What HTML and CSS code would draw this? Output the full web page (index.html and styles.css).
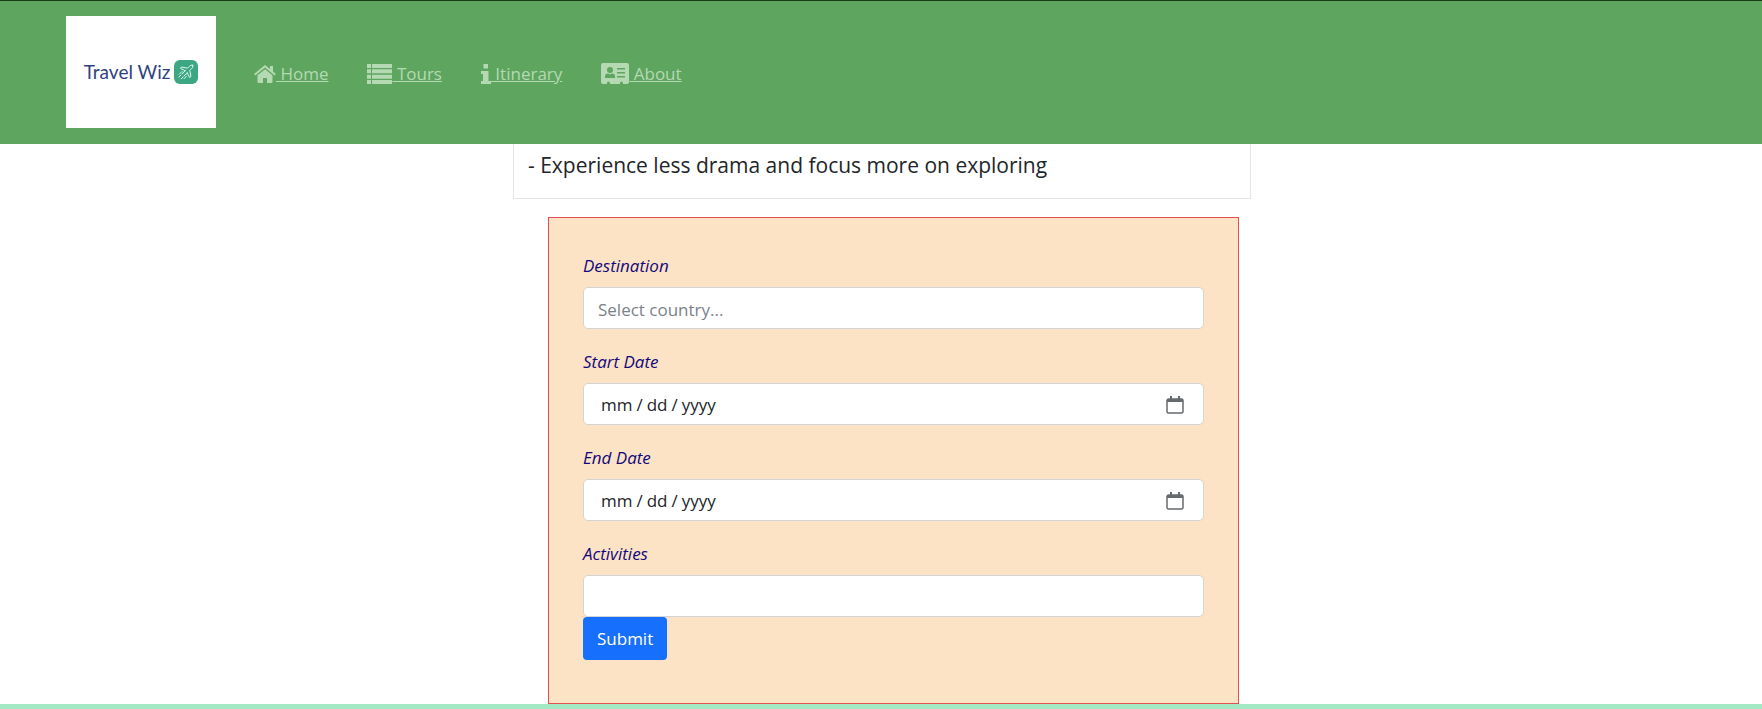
FILE: index.html
```html
<!DOCTYPE html>
<html lang="en">
<head>
<meta charset="utf-8">
<meta name="viewport" content="width=device-width, initial-scale=1">
<title>Travel Wiz</title>
<link rel="stylesheet" href="styles.css">
</head>
<body>
<header class="navbar">
  <a class="brand" href="#">
    <span class="brand-name">Travel Wiz</span>
    <svg class="brand-icon" viewBox="0 0 24 24" aria-hidden="true">
      <rect width="24" height="24" rx="6" fill="#3ba783"/>
      <g fill="none" stroke="#e4f6ef" stroke-width="1" stroke-linejoin="round" stroke-linecap="round">
        <path d="M18.8 5.2c-1.3-.5-2.6.3-3.400 1.200L13.600 8.200 7.600 7l-1.200 1.300 4.700 2.400M18.800 5.200c.5 1.300-.3 2.600-1.200 3.400L15.800 10.400 17 16.400l-1.300 1.200-2.400-4.700"/>
        <path d="M11.100 10.700L8 14M13.300 12.900L10 16M8 11.500l-2.800 2.800M6.800 15.200l-1.900 1.900M9 17l-1.800 1.900M12.500 16.200l-2.500 2.500"/>
      </g>
    </svg>
  </a>
  <nav class="nav-links">
    <a class="nav-link" href="#"><svg class="nav-icon" width="22" height="18" viewBox="0 0 22 18" aria-hidden="true"><path d="M11 0L0 9l1.300 1.500L11 2.600l9.700 7.900L22 9l-3-2.500V1h-3v3zM11 4.200L3.500 10.300V17a1 1 0 0 0 1 1H9v-5h4v5h4.500a1 1 0 0 0 1-1v-6.700z"/></svg><span class="nav-text">&nbsp;Home</span></a>
    <a class="nav-link" href="#"><svg class="nav-icon" width="25" height="20" viewBox="0 0 25 20" aria-hidden="true"><path d="M0 0h4v4H0zM5 0h20v4H5zM0 5.300h4v4H0zM5 5.300h20v4H5zM0 10.700h4v4H0zM5 10.700h20v4H5zM0 16h4v4H0zM5 16h20v4H5z"/></svg><span class="nav-text">&nbsp;Tours</span></a>
    <a class="nav-link" href="#"><svg class="nav-icon" width="10" height="20" viewBox="0 0 10 20" aria-hidden="true"><path d="M2.500 0h4.500v4.500H2.500zM0 7h7.500v10H10v3H0v-3h2v-7H0z"/></svg><span class="nav-text">&nbsp;Itinerary</span></a>
    <a class="nav-link" href="#"><svg class="nav-icon" width="28" height="22" viewBox="0 0 28 22" aria-hidden="true"><path fill-rule="evenodd" d="M2 0h24a2 2 0 0 1 2 2v17a2 2 0 0 1-2 2h-4v-1a1 1 0 0 0-3 0v1H9v-1a1 1 0 0 0-3 0v1H2a2 2 0 0 1-2-2V2a2 2 0 0 1 2-2zM9 4a3 3 0 1 0 0 6 3 3 0 0 0 0-6zM7 10.500a3 3 0 0 0-3 3V15h10v-1.500a3 3 0 0 0-3-3c-1 1-3 1-4 0zM16 5h8v1.500h-8zM16 9h8v1.500h-8zM16 13h8v1.500h-8z"/></svg><span class="nav-text">&nbsp;About</span></a>
  </nav>
</header>
<main class="content">
  <section class="card">
    <p class="card-text">- Experience less drama and focus more on exploring</p>
  </section>
  <form class="trip-form">
    <div class="field">
      <label class="label" for="destination">Destination</label>
      <input class="input" id="destination" type="text" placeholder="Select country...">
    </div>
    <div class="field">
      <label class="label" for="start">Start Date</label>
      <input class="input" id="start" type="date">
    </div>
    <div class="field">
      <label class="label" for="end">End Date</label>
      <input class="input" id="end" type="date">
    </div>
    <div class="field">
      <label class="label" for="activities">Activities</label>
      <input class="input" id="activities" type="text">
    </div>
    <button class="submit" type="submit">Submit</button>
  </form>
</main>
<footer class="footer"></footer>
</body>
</html>
```
FILE: styles.css
```css
* { box-sizing: border-box; }

body {
  margin: 0;
  min-height: 100vh;
  display: flex;
  flex-direction: column;
  background: #fff;
  color: #212529;
  font-family: "Open Sans", "Noto Sans", sans-serif;
  font-size: 17px;
  line-height: 26px;
}

.navbar {
  display: flex;
  align-items: center;
  gap: 38px;
  padding: 15px 66px 16px;
  border-top: 1px solid #173d17;
  background: #5ea55f;
}

.brand {
  display: flex;
  align-items: center;
  justify-content: center;
  gap: 4px;
  width: 150px;
  height: 112px;
  background: #fff;
  color: #2f437f;
  font-family: Lato, sans-serif;
  font-size: 19px;
  text-decoration: none;
  white-space: nowrap;
}

.brand-icon { width: 24px; height: 24px; }

.nav-links {
  display: flex;
  gap: 39px;
  padding-top: 4px;
}

.nav-link {
  display: flex;
  align-items: center;
  color: #b5d9b3;
  text-decoration: none;
}

.nav-text { text-decoration: underline; }

.nav-icon { fill: #b5d9b3; }

.content {
  width: 42%;
  margin: 0 auto;
  padding-left: 2px;
}

.card {
  padding: 5px 14px 16px;
  border: 1px solid #e3e4e5;
  border-top: 0;
}

.card-text {
  margin: 0;
  font-size: 21px;
  line-height: 33px;
}

.trip-form {
  margin: 18px 12px 0 35px;
  padding: 35px 34px 43px;
  border: 1px solid #e2504f;
  background: #fde3c5;
}

.field { margin-bottom: 20px; }

.field:nth-last-child(2) { margin-bottom: 0; }

.label {
  display: block;
  margin-bottom: 8px;
  color: #12087c;
  font-style: italic;
}

.input {
  display: block;
  width: 100%;
  height: 42px;
  padding: 8px 14px 6px;
  border: 1px solid #d3d4d5;
  border-radius: 5px;
  background: #fff;
  color: #212529;
  font: inherit;
}

.input::placeholder { color: #7b8288; opacity: 1; }

.input::-webkit-datetime-edit { padding-left: 2px; }

.input::-webkit-datetime-edit-text { padding: 0 3px; }

.input::-webkit-calendar-picker-indicator {
  width: 18px;
  height: 18px;
  margin-right: 5px;
  padding: 0;
  background: url("data:image/svg+xml,%3Csvg xmlns='http://www.w3.org/2000/svg' viewBox='0 0 18 18'%3E%3Cpath fill='none' stroke='%23666a6d' stroke-width='1.5' d='M2.500 3h13a1.500 1.500 0 0 1 1.500 1.500v11a1.500 1.500 0 0 1-1.500 1.500h-13A1.500 1.500 0 0 1 1 15.500v-11A1.500 1.500 0 0 1 2.500 3z'/%3E%3Cpath fill='%23666a6d' d='M1 3h16v3H1zM4 0h2v3H4zM12 0h2v3h-2z'/%3E%3C/svg%3E") center / 18px no-repeat;
}

.submit {
  display: block;
  height: 43px;
  padding: 0 14px;
  border: 0;
  border-radius: 4px;
  background: #176ffd;
  color: #fff;
  font: inherit;
}

.footer {
  flex: 1;
  min-height: 5px;
  background: #a3e9c4;
}
```
